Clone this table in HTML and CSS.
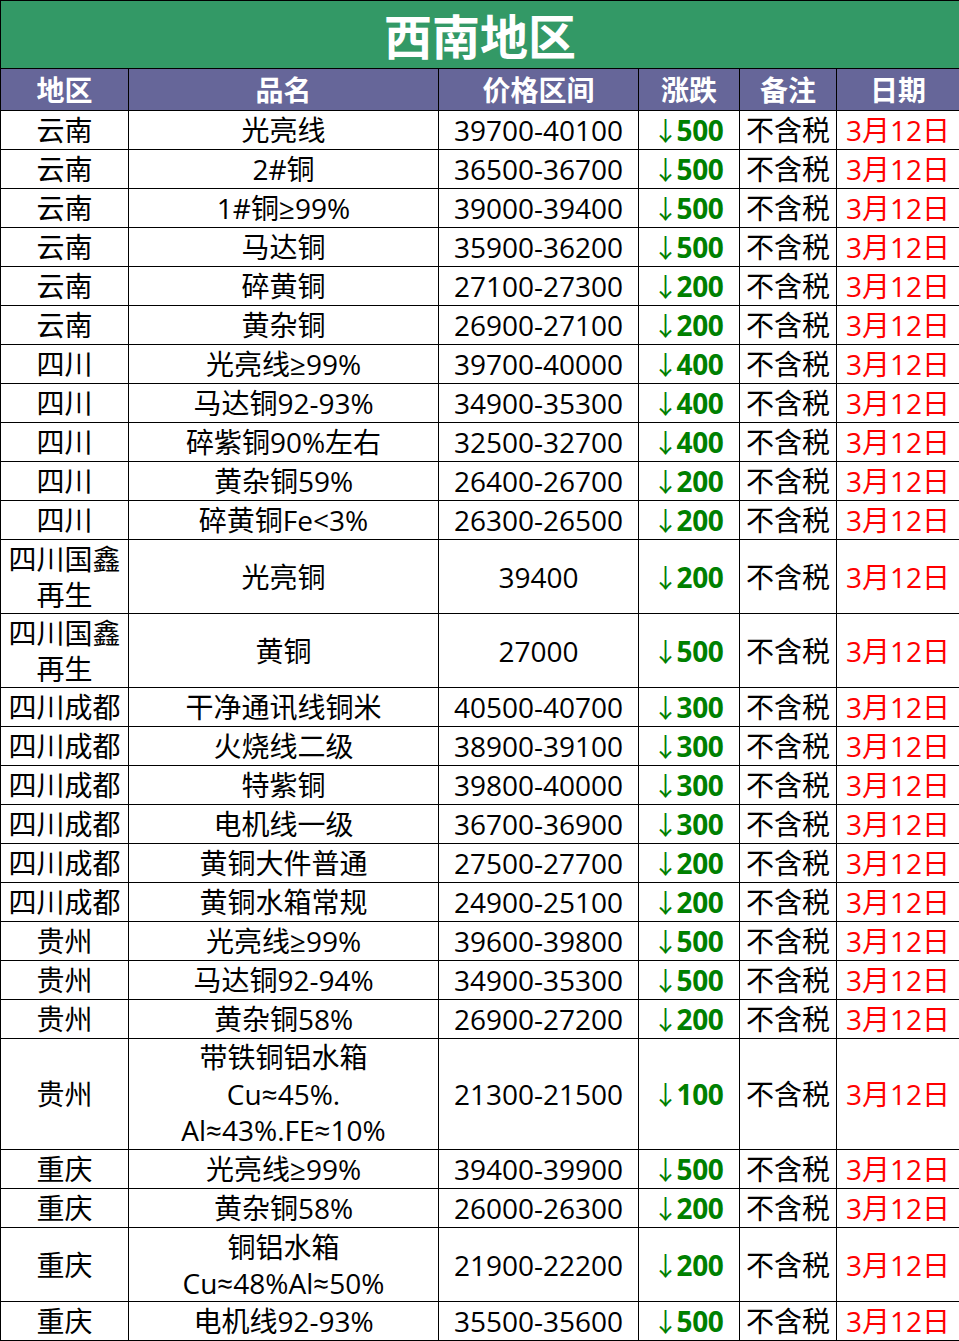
FILE: index.html
```html
<!DOCTYPE html>
<html lang="zh-CN">
<head>
<meta charset="utf-8">
<title>西南地区</title>
<link rel="stylesheet" href="styles.css">
</head>
<body>
<table class="sheet">
  <colgroup>
    <col class="c1"><col class="c2"><col class="c3"><col class="c4"><col class="c5"><col class="c6">
  </colgroup>
  <thead>
    <tr class="title-row"><th colspan="6" class="title">西南地区</th></tr>
    <tr class="head-row"><th>地区</th><th>品名</th><th>价格区间</th><th>涨跌</th><th>备注</th><th>日期</th></tr>
  </thead>
  <tbody>
    <tr class="r1"><td>云南</td><td>光亮线</td><td>39700-40100</td><td class="chg"><span class="ar">↓</span>500</td><td>不含税</td><td class="date">3月12日</td></tr>
    <tr class="r1"><td>云南</td><td>2#铜</td><td>36500-36700</td><td class="chg"><span class="ar">↓</span>500</td><td>不含税</td><td class="date">3月12日</td></tr>
    <tr class="r1"><td>云南</td><td>1#铜≥99%</td><td>39000-39400</td><td class="chg"><span class="ar">↓</span>500</td><td>不含税</td><td class="date">3月12日</td></tr>
    <tr class="r1"><td>云南</td><td>马达铜</td><td>35900-36200</td><td class="chg"><span class="ar">↓</span>500</td><td>不含税</td><td class="date">3月12日</td></tr>
    <tr class="r1"><td>云南</td><td>碎黄铜</td><td>27100-27300</td><td class="chg"><span class="ar">↓</span>200</td><td>不含税</td><td class="date">3月12日</td></tr>
    <tr class="r1"><td>云南</td><td>黄杂铜</td><td>26900-27100</td><td class="chg"><span class="ar">↓</span>200</td><td>不含税</td><td class="date">3月12日</td></tr>
    <tr class="r1"><td>四川</td><td>光亮线≥99%</td><td>39700-40000</td><td class="chg"><span class="ar">↓</span>400</td><td>不含税</td><td class="date">3月12日</td></tr>
    <tr class="r1"><td>四川</td><td>马达铜92-93%</td><td>34900-35300</td><td class="chg"><span class="ar">↓</span>400</td><td>不含税</td><td class="date">3月12日</td></tr>
    <tr class="r1"><td>四川</td><td>碎紫铜90%左右</td><td>32500-32700</td><td class="chg"><span class="ar">↓</span>400</td><td>不含税</td><td class="date">3月12日</td></tr>
    <tr class="r1"><td>四川</td><td>黄杂铜59%</td><td>26400-26700</td><td class="chg"><span class="ar">↓</span>200</td><td>不含税</td><td class="date">3月12日</td></tr>
    <tr class="r1"><td>四川</td><td>碎黄铜Fe&lt;3%</td><td>26300-26500</td><td class="chg"><span class="ar">↓</span>200</td><td>不含税</td><td class="date">3月12日</td></tr>
    <tr class="r2"><td>四川国鑫<br>再生</td><td>光亮铜</td><td>39400</td><td class="chg"><span class="ar">↓</span>200</td><td>不含税</td><td class="date">3月12日</td></tr>
    <tr class="r2"><td>四川国鑫<br>再生</td><td>黄铜</td><td>27000</td><td class="chg"><span class="ar">↓</span>500</td><td>不含税</td><td class="date">3月12日</td></tr>
    <tr class="r1"><td>四川成都</td><td>干净通讯线铜米</td><td>40500-40700</td><td class="chg"><span class="ar">↓</span>300</td><td>不含税</td><td class="date">3月12日</td></tr>
    <tr class="r1"><td>四川成都</td><td>火烧线二级</td><td>38900-39100</td><td class="chg"><span class="ar">↓</span>300</td><td>不含税</td><td class="date">3月12日</td></tr>
    <tr class="r1"><td>四川成都</td><td>特紫铜</td><td>39800-40000</td><td class="chg"><span class="ar">↓</span>300</td><td>不含税</td><td class="date">3月12日</td></tr>
    <tr class="r1"><td>四川成都</td><td>电机线一级</td><td>36700-36900</td><td class="chg"><span class="ar">↓</span>300</td><td>不含税</td><td class="date">3月12日</td></tr>
    <tr class="r1"><td>四川成都</td><td>黄铜大件普通</td><td>27500-27700</td><td class="chg"><span class="ar">↓</span>200</td><td>不含税</td><td class="date">3月12日</td></tr>
    <tr class="r1"><td>四川成都</td><td>黄铜水箱常规</td><td>24900-25100</td><td class="chg"><span class="ar">↓</span>200</td><td>不含税</td><td class="date">3月12日</td></tr>
    <tr class="r1"><td>贵州</td><td>光亮线≥99%</td><td>39600-39800</td><td class="chg"><span class="ar">↓</span>500</td><td>不含税</td><td class="date">3月12日</td></tr>
    <tr class="r1"><td>贵州</td><td>马达铜92-94%</td><td>34900-35300</td><td class="chg"><span class="ar">↓</span>500</td><td>不含税</td><td class="date">3月12日</td></tr>
    <tr class="r1"><td>贵州</td><td>黄杂铜58%</td><td>26900-27200</td><td class="chg"><span class="ar">↓</span>200</td><td>不含税</td><td class="date">3月12日</td></tr>
    <tr class="r3"><td>贵州</td><td>带铁铜铝水箱<br>Cu≈45%.<br>Al≈43%.FE≈10%</td><td>21300-21500</td><td class="chg"><span class="ar">↓</span>100</td><td>不含税</td><td class="date">3月12日</td></tr>
    <tr class="r1"><td>重庆</td><td>光亮线≥99%</td><td>39400-39900</td><td class="chg"><span class="ar">↓</span>500</td><td>不含税</td><td class="date">3月12日</td></tr>
    <tr class="r1"><td>重庆</td><td>黄杂铜58%</td><td>26000-26300</td><td class="chg"><span class="ar">↓</span>200</td><td>不含税</td><td class="date">3月12日</td></tr>
    <tr class="r2"><td>重庆</td><td>铜铝水箱<br>Cu≈48%Al≈50%</td><td>21900-22200</td><td class="chg"><span class="ar">↓</span>200</td><td>不含税</td><td class="date">3月12日</td></tr>
    <tr class="r1"><td>重庆</td><td>电机线92-93%</td><td>35500-35600</td><td class="chg"><span class="ar">↓</span>500</td><td>不含税</td><td class="date">3月12日</td></tr>
  </tbody>
</table>
</body>
</html>
```
FILE: styles.css
```css
html, body {
  margin: 0;
  padding: 0;
  background: #ffffff;
}
.sheet {
  border-collapse: collapse;
  table-layout: fixed;
  width: 959px;
  font-family: "Open Sans", "Noto Sans CJK SC", sans-serif;
  font-size: 28px;
  color: #000000;
}
.c1 { width: 128px; }
.c2 { width: 310px; }
.c3 { width: 200px; }
.c4 { width: 101px; }
.c5 { width: 97px; }
.c6 { width: 123px; }
.sheet th, .sheet td {
  border: 1px solid #000000;
  padding: 0;
  text-align: center;
  vertical-align: middle;
  line-height: 37px;
  white-space: nowrap;
  overflow: hidden;
}
.title {
  background: #339966;
  color: #ffffff;
  font-size: 48px;
  font-weight: 700;
  height: 67px;
  line-height: 60px;
  font-family: "Noto Sans CJK SC", sans-serif;
}
.head-row th {
  background: #666699;
  color: #ffffff;
  font-size: 28px;
  font-weight: 700;
  height: 41px;
  font-family: "Noto Sans CJK SC", sans-serif;
}
.r1 td { height: 38px; }
.r2 td { height: 73px; line-height: 36px; }
.r3 td { height: 110px; line-height: 36.5px; }
.chg {
  color: #008000;
  font-weight: 700;
  letter-spacing: -0.3px;
}
.chg .ar {
  font-weight: 400;
  font-family: "Noto Sans CJK SC", sans-serif;
  font-size: 26px;
  letter-spacing: 0;
  margin-left: -2px;
  margin-right: -2px;
}
.date {
  color: #ff0000;
}
```
